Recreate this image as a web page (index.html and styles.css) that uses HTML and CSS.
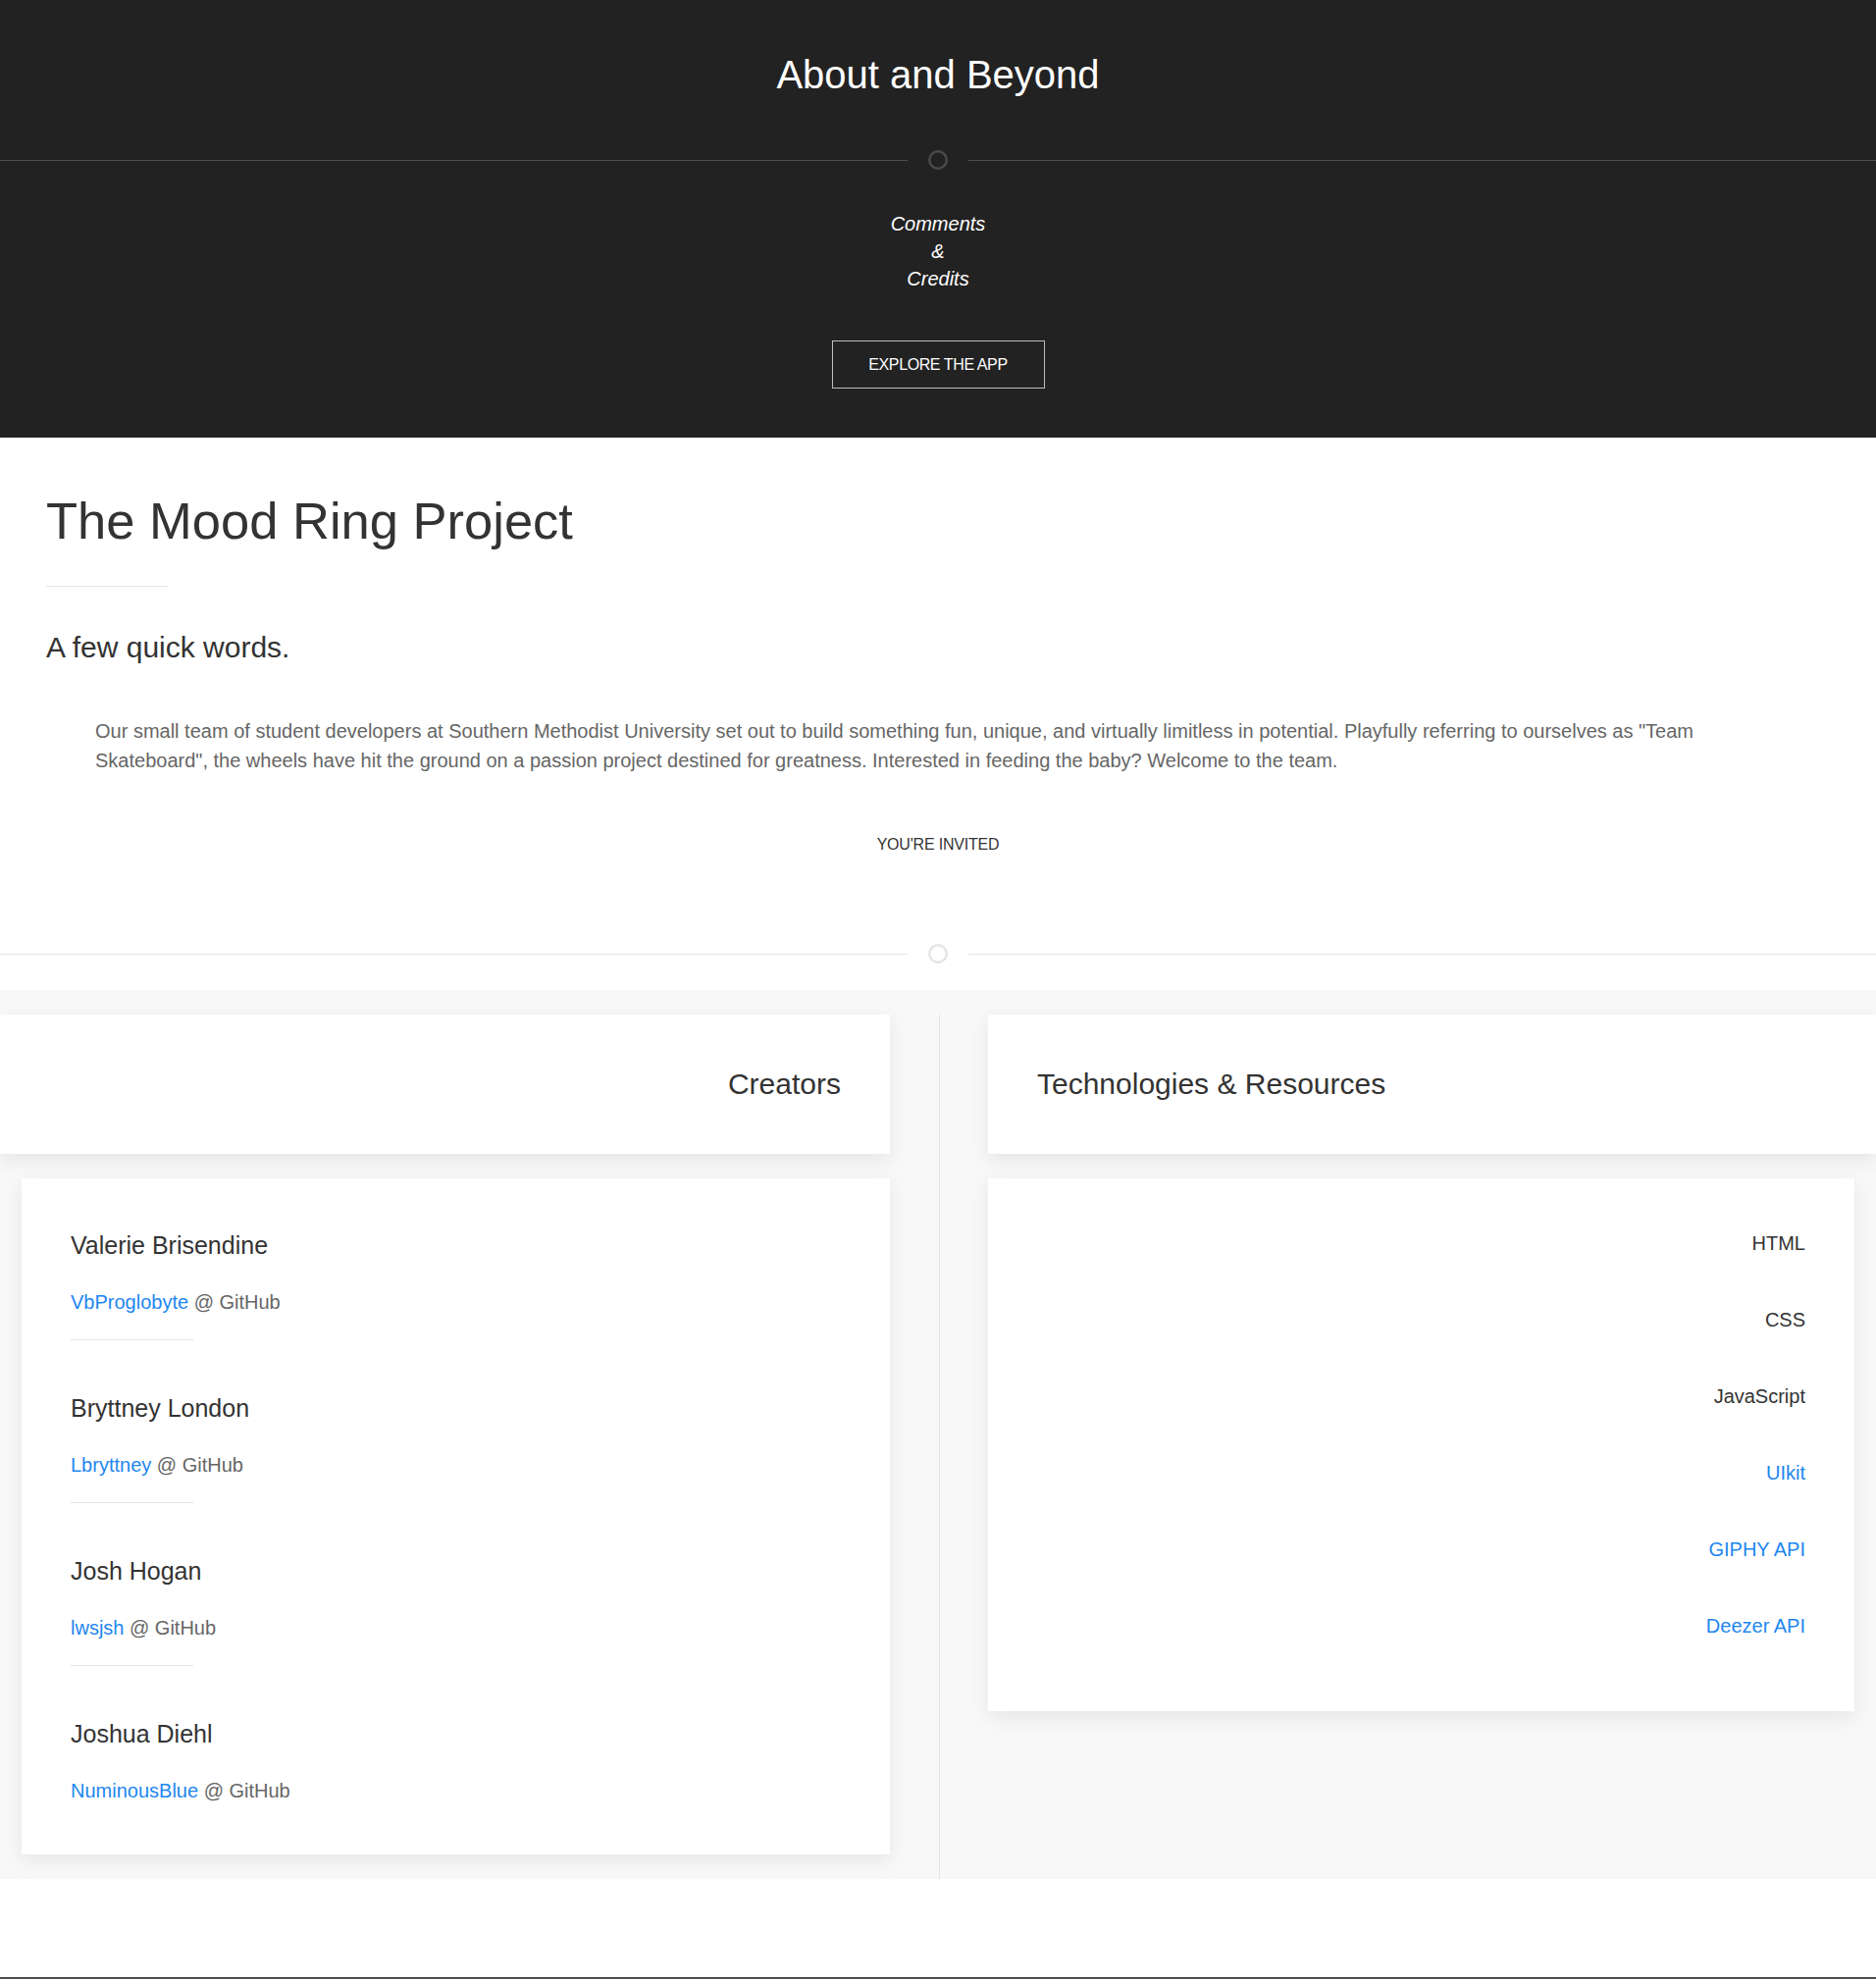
FILE: index.html
```html
<!DOCTYPE html>
<html lang="en">
<head>
<meta charset="utf-8">
<title>About and Beyond</title>
<link rel="stylesheet" href="styles.css">
</head>
<body>
  <header class="hero">
    <h2 class="hero-title">About and Beyond</h2>
    <div class="divider-icon divider-dark">
      <span class="divider-line"></span>
      <svg class="divider-ring" width="20" height="20" viewBox="0 0 20 20"><circle cx="10" cy="10" r="8.75" fill="none" stroke-width="2.5"/></svg>
      <span class="divider-line"></span>
    </div>
    <p class="hero-sub"><em>Comments<br>&amp;<br>Credits</em></p>
    <a class="btn-outline" href="#">Explore the App</a>
  </header>

  <main class="intro">
    <div class="container">
      <h1 class="page-title">The Mood Ring Project</h1>
      <hr class="divider-small">
      <h3 class="sub-title">A few quick words.</h3>
      <p class="intro-text">Our small team of student developers at Southern Methodist University set out to build something fun, unique, and virtually limitless in potential. Playfully referring to ourselves as "Team Skateboard", the wheels have hit the ground on a passion project destined for greatness. Interested in feeding the baby? Welcome to the team.</p>
      <div class="invited">You're invited</div>
    </div>
    <div class="divider-icon divider-light">
      <span class="divider-line"></span>
      <svg class="divider-ring" width="20" height="20" viewBox="0 0 20 20"><circle cx="10" cy="10" r="8.75" fill="none" stroke-width="2.5"/></svg>
      <span class="divider-line"></span>
    </div>
  </main>

  <section class="credits">
    <div class="col col-left">
      <div class="card card-head align-right"><h3 class="card-title">Creators</h3></div>
      <div class="card card-list creators">
        <div class="creator">
          <h4 class="creator-name">Valerie Brisendine</h4>
          <p class="creator-link"><a href="#">VbProglobyte</a> @ GitHub</p>
        </div>
        <hr class="divider-small sep">
        <div class="creator">
          <h4 class="creator-name">Bryttney London</h4>
          <p class="creator-link"><a href="#">Lbryttney</a> @ GitHub</p>
        </div>
        <hr class="divider-small sep">
        <div class="creator">
          <h4 class="creator-name">Josh Hogan</h4>
          <p class="creator-link"><a href="#">lwsjsh</a> @ GitHub</p>
        </div>
        <hr class="divider-small sep">
        <div class="creator">
          <h4 class="creator-name">Joshua Diehl</h4>
          <p class="creator-link"><a href="#">NuminousBlue</a> @ GitHub</p>
        </div>
      </div>
    </div>
    <div class="col col-right">
      <div class="card card-head"><h3 class="card-title">Technologies &amp; Resources</h3></div>
      <div class="card card-list tech">
        <span class="tech-item">HTML</span>
        <span class="tech-item">CSS</span>
        <span class="tech-item">JavaScript</span>
        <a class="tech-item tech-link" href="#">UIkit</a>
        <a class="tech-item tech-link" href="#">GIPHY API</a>
        <a class="tech-item tech-link" href="#">Deezer API</a>
      </div>
    </div>
  </section>

  <div class="spacer"></div>
  <footer class="footer"></footer>
</body>
</html>
```

FILE: styles.css
```css
* { box-sizing: border-box; }

html, body {
  margin: 0;
  padding: 0;
}

body {
  font-family: "Liberation Sans", Arial, sans-serif;
  font-size: 20px;
  line-height: 30px;
  color: #666;
  background: #fff;
}

a { color: #1e87f0; text-decoration: none; }

/* ---------- hero ---------- */
.hero {
  background: #222;
  color: #fff;
  text-align: center;
  padding: 52px 0 50px;
}

.hero-title {
  margin: 0;
  font-size: 40px;
  line-height: 48px;
  font-weight: 400;
  color: #fff;
}

.divider-icon {
  display: flex;
  align-items: center;
  height: 26px;
}

.divider-line {
  flex: 1;
  height: 1px;
}

.divider-ring {
  display: block;
  margin: 0 21px;
}

.divider-dark { margin-top: 50px; }
.divider-dark .divider-line { background: #4e4e4e; }
.divider-dark .divider-ring circle { stroke: #4a4a4a; }

.divider-light { margin-top: 83px; }
.divider-light .divider-line { background: #e5e5e5; }
.divider-light .divider-ring circle { stroke: #e5e5e5; }

.hero-sub {
  margin: 38px 0 0;
  font-size: 20px;
  line-height: 28px;
  color: #fff;
}

.btn-outline {
  display: inline-block;
  margin-top: 49px;
  width: 217px;
  height: 49px;
  line-height: 47px;
  border: 1px solid #bdbdbd;
  color: #fff;
  font-size: 16px;
  letter-spacing: -0.4px;
  text-transform: uppercase;
  vertical-align: top;
}

/* ---------- intro ---------- */
.intro {
  padding: 53px 0 24px;
}

.container {
  padding: 0 47px;
}

.page-title {
  margin: 0;
  font-size: 52.5px;
  line-height: 63px;
  font-weight: 400;
  color: #333;
}

.divider-small {
  width: 125px;
  height: 0;
  margin: 35px 0 0;
  border: 0;
  border-top: 1px solid #e5e5e5;
}

.sub-title {
  margin: 41px 0 0;
  font-size: 30px;
  line-height: 42px;
  font-weight: 400;
  color: #333;
}

.intro-text {
  margin: 49px 0 0;
  padding: 0 50px;
}

.invited {
  margin-top: 56px;
  text-align: center;
  text-transform: uppercase;
  color: #333;
  font-size: 16px;
  letter-spacing: -0.2px;
  line-height: 30px;
}

/* ---------- credits ---------- */
.credits {
  background: #f8f8f8;
  padding-top: 25px;
  display: flex;
  align-items: stretch;
}

.col-left {
  width: 907px;
  flex: none;
}

.col-right {
  flex: 1;
  margin-left: 50px;
  padding-left: 49px;
  border-left: 1px solid #e5e5e5;
}

.card {
  background: #fff;
  box-shadow: 0 6px 19px rgba(0, 0, 0, 0.08);
}

.card-head {
  padding: 50px;
}

.align-right { text-align: right; }

.card-title {
  margin: 0;
  font-size: 30px;
  line-height: 42px;
  font-weight: 400;
  color: #333;
}

.card-list {
  margin-top: 25px;
}

.creators {
  margin-left: 22px;
  margin-bottom: 25px;
  padding: 51px 50px 50px;
}

.creator-name {
  margin: 0;
  font-size: 25px;
  line-height: 35px;
  font-weight: 400;
  color: #333;
}

.creator-link {
  margin: 25px 0 0;
}

.divider-small.sep {
  margin: 23px 0 52px;
}

.tech {
  margin-right: 22px;
  padding: 51px 50px 72px;
  display: flex;
  flex-direction: column;
  align-items: flex-end;
  gap: 48px;
}

.tech-item {
  display: block;
  line-height: 30px;
  color: #333;
}

.tech-item.tech-link { color: #1e87f0; }

/* ---------- footer ---------- */
.spacer { height: 100px; }

.footer {
  height: 80px;
  background: #222;
  border-top: 2px solid #4d4d4d;
}
```
